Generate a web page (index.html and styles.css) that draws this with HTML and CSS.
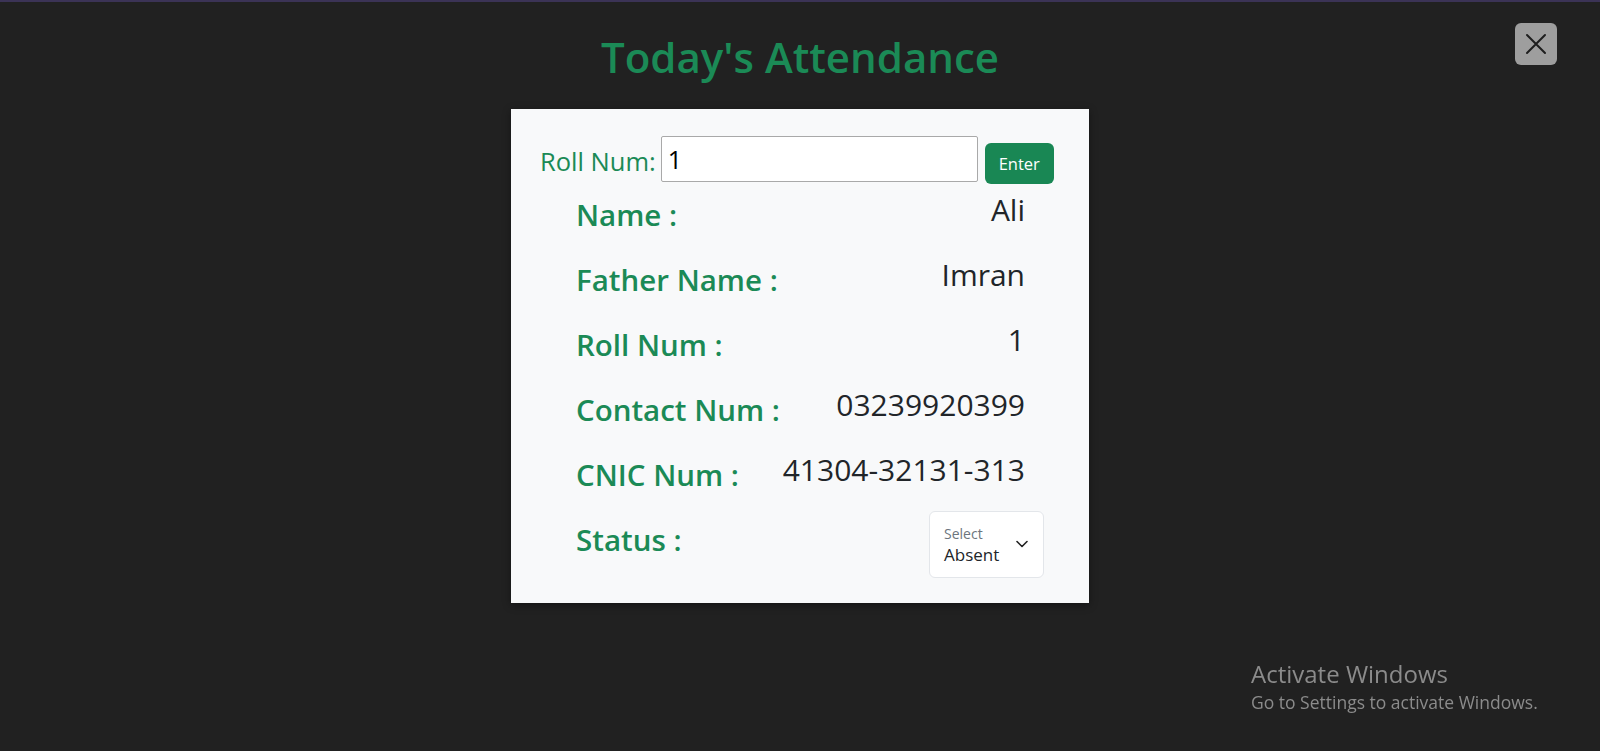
FILE: index.html
```html
<!DOCTYPE html>
<html lang="en">
<head>
<meta charset="utf-8">
<title>Today's Attendance</title>
<link rel="stylesheet" href="styles.css">
</head>
<body>
<div class="page">
  <button class="close-btn" aria-label="Close">
    <svg width="22" height="22" viewBox="0 0 22 22"><path d="M2 2L20 20M20 2L2 20" stroke="#1e1e1e" stroke-width="2" stroke-linecap="round"/></svg>
  </button>
  <h1 class="title">Today's Attendance</h1>
  <div class="card">
    <div class="search-row">
      <label class="search-label" for="roll">Roll Num:</label>
      <input id="roll" class="search-input" type="text" value="1">
      <button class="enter-btn">Enter</button>
    </div>
    <div class="details">
      <div class="row"><span class="label">Name :</span><span class="value">Ali</span></div>
      <div class="row"><span class="label">Father Name :</span><span class="value">Imran</span></div>
      <div class="row"><span class="label">Roll Num :</span><span class="value">1</span></div>
      <div class="row"><span class="label">Contact Num :</span><span class="value">03239920399</span></div>
      <div class="row"><span class="label">CNIC Num :</span><span class="value">41304-32131-313</span></div>
      <div class="row status-row"><span class="label">Status :</span>
        <div class="select">
          <div class="select-text">
            <span class="select-caption">Select</span>
            <span class="select-value">Absent</span>
          </div>
          <svg class="chevron" width="12" height="8" viewBox="0 0 12 8"><path d="M1 1.5L6 6.5L11 1.5" fill="none" stroke="#222" stroke-width="1.6" stroke-linecap="round" stroke-linejoin="round"/></svg>
        </div>
      </div>
    </div>
  </div>
</div>
<div class="activate">
  <div class="activate-title">Activate Windows</div>
  <div class="activate-sub">Go to Settings to activate Windows.</div>
</div>
</body>
</html>
```

FILE: styles.css
```css
* { box-sizing: border-box; }
html, body { height: 100%; }
body {
  margin: 0;
  background: #212121;
  border-top: 2px solid #3b3356;
  font-family: "Open Sans", "Noto Sans", sans-serif;
  color: #212529;
  overflow: hidden;
}
.page {
  display: flex;
  flex-direction: column;
  align-items: center;
  position: relative;
}
.close-btn {
  position: absolute;
  top: 21px;
  right: 43px;
  width: 42px;
  height: 42px;
  border: none;
  border-radius: 6px;
  background: #9e9e9e;
  display: flex;
  align-items: center;
  justify-content: center;
  padding: 0;
}
.title {
  margin: 31px 0 28px;
  font-size: 42px;
  font-weight: 600;
  line-height: 48px;
  color: #1b8a56;
}
.card {
  width: 578px;
  background: #f8f9fa;
  padding: 27px 34px 31px 29px;
  box-shadow: 0 2px 8px rgba(0,0,0,0.4);
}
.search-row {
  display: flex;
  align-items: flex-start;
  gap: 6px;
  height: 46px;
}
.search-label {
  font-size: 25.5px;
  line-height: 46px;
  color: #1b8a56;
  margin-right: -1px;
  margin-top: 2px;
}
.search-input {
  width: 317px;
  height: 46px;
  font-family: inherit;
  font-size: 25px;
  padding: 0 6px;
  border: 1px solid #a9a9a9;
  border-radius: 2px;
  background: #fff;
  color: #000;
}
.enter-btn {
  margin-left: 1px;
  margin-top: 7px;
  width: 69px;
  height: 41px;
  border: none;
  border-radius: 6px;
  background: #198754;
  color: #fff;
  font-family: inherit;
  font-size: 16.5px;
}
.details {
  padding: 0 30px 0 36px;
}
.row {
  height: 65px;
  display: flex;
  justify-content: space-between;
  align-items: center;
}
.label {
  font-size: 29.5px;
  font-weight: 600;
  color: #1b8a56;
}
.value {
  font-size: 30px;
  color: #212529;
  margin-bottom: 10px;
}
.status-row { margin-right: -19px; }
.select {
  width: 115px;
  height: 67px;
  background: #fff;
  border: 1px solid #e3e6ea;
  border-radius: 6px;
  display: flex;
  align-items: center;
  justify-content: space-between;
  padding: 0 15px 0 14px;
  margin-top: 10px;
}
.select-text {
  display: flex;
  flex-direction: column;
}
.select-caption {
  font-size: 14px;
  color: #6c757d;
  line-height: 19px;
}
.select-value {
  font-size: 17px;
  line-height: 23px;
  color: #212529;
}
.chevron { margin-top: -2px; }
.activate {
  position: fixed;
  left: 1251px;
  top: 658px;
  color: #8b8b8b;
}
.activate-title { font-size: 24px; line-height: 32px; }
.activate-sub { font-size: 17.5px; line-height: 24px; }
```
